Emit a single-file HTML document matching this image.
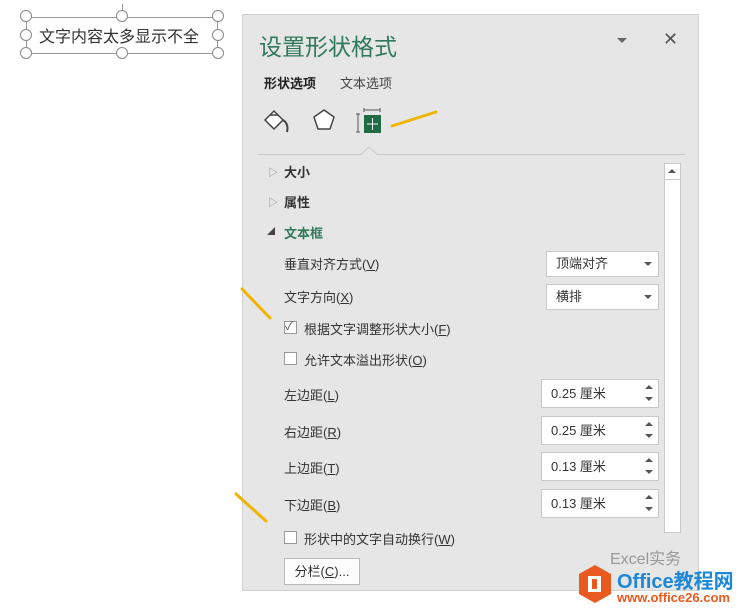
<!DOCTYPE html>
<html><head><meta charset="utf-8"><style>
*{margin:0;padding:0;box-sizing:border-box}
body{width:741px;height:613px;background:#fff;position:relative;overflow:hidden;font-family:"Liberation Sans","Noto Sans CJK SC",sans-serif;color:#333}
.a{position:absolute;white-space:nowrap}
.panel{position:absolute;left:242px;top:14px;width:457px;height:577px;background:#e6e6e6;border:1px solid #d2d2d2}
.t{font-size:13px;color:#333}
.box{position:absolute;background:#fff;border:1px solid #c8c8c8;font-size:13px;padding-left:9px;color:#333}
.cb{position:absolute;width:13px;height:13px;background:#fff;border:1px solid #999}
.h{border-radius:50%;width:12px;height:12px;border:1.5px solid #888;background:#fff;position:absolute}
</style></head><body>
<div class="a" style="left:26px;top:17px;width:192px;height:37px;border:1.5px solid #999"></div>
<div class="a" style="left:122px;top:4px;width:1px;height:12px;background:#999"></div>
<div class="h" style="left:20px;top:10px"></div><div class="h" style="left:116px;top:10px"></div><div class="h" style="left:212px;top:10px"></div>
<div class="h" style="left:20px;top:29px"></div><div class="h" style="left:212px;top:29px"></div>
<div class="h" style="left:20px;top:47px"></div><div class="h" style="left:116px;top:47px"></div><div class="h" style="left:212px;top:47px"></div>
<div class="a" style="left:39px;top:23px;font-size:16px;color:#333">文字内容太多显示不全</div>

<div class="panel"></div>
<div class="a" style="left:259px;top:28px;font-size:23px;color:#2f7a5a">设置形状格式</div>
<div class="a" style="left:617px;top:38px;width:0;height:0;border-left:5px solid transparent;border-right:5px solid transparent;border-top:5px solid #666"></div>
<div class="a" style="left:663px;top:29px;font-size:18px;color:#555">✕</div>
<div class="a" style="left:264px;top:73px;font-size:13px;font-weight:bold;color:#222">形状选项</div>
<div class="a" style="left:340px;top:73px;font-size:13px;color:#444">文本选项</div>
<svg class="a" style="left:262px;top:106px" width="32" height="28"><path d="M3 14 L12 5 L21 14 L12 23 Z" fill="#fff" stroke="#444" stroke-width="1.5"/><path d="M8 9 L16 9" stroke="#444" stroke-width="1.5"/><path d="M21 14 Q27 18 25 26" fill="none" stroke="#444" stroke-width="2"/></svg>
<svg class="a" style="left:311px;top:107px" width="26" height="26"><path d="M13 3 L23 10 L19 22 L7 22 L3 10 Z" fill="#fff" stroke="#444" stroke-width="1.5"/></svg>
<svg class="a" style="left:356px;top:108px" width="28" height="26"><path d="M2 6 L2 24 M0 6 L4 6 M0 24 L4 24 M8 2 L24 2 M8 0 L8 4 M24 0 L24 4" stroke="#555" stroke-width="1"/><rect x="8" y="7" width="17" height="18" fill="#1f6b45"/><path d="M16.5 10 L16.5 22 M11 16 L22 16" stroke="#fff" stroke-width="1"/></svg>
<svg class="a" style="left:388px;top:108px" width="52" height="22"><path d="M4 18 L48 4" stroke="#f0b400" stroke-width="3" stroke-linecap="round"/></svg>
<div class="a" style="left:258px;top:154px;width:427px;height:1px;background:#c9c9c9"></div>
<svg class="a" style="left:360px;top:146px" width="18" height="10"><path d="M0 9 L9 1 L18 9" fill="#e6e6e6" stroke="#c9c9c9"/></svg>
<div class="a" style="left:664px;top:163px;width:17px;height:370px;background:#fff;border:1px solid #c8c8c8"></div>
<div class="a" style="left:664px;top:163px;width:17px;height:17px;border:1px solid #c8c8c8"></div>
<div class="a" style="left:668px;top:169px;border-left:4px solid transparent;border-right:4px solid transparent;border-bottom:4px solid #555"></div>
<div class="a" style="left:268px;top:164px;font-size:10px;color:#888">▷</div>
<div class="a" style="left:284px;top:162px;font-size:13px;font-weight:bold;color:#333">大小</div>
<div class="a" style="left:268px;top:194px;font-size:10px;color:#888">▷</div>
<div class="a" style="left:284px;top:192px;font-size:13px;font-weight:bold;color:#333">属性</div>
<div class="a" style="left:267px;top:226px;font-size:8px;color:#444">◢</div>
<div class="a" style="left:284px;top:223px;font-size:13px;font-weight:bold;color:#2f7a5a">文本框</div>
<div class="a t" style="left:284px;top:254px">垂直对齐方式(<u>V</u>)</div>
<div class="box" style="left:546px;top:251px;width:113px;height:26px;line-height:24px">顶端对齐<span style="position:absolute;right:6px;top:10px;border-left:4px solid transparent;border-right:4px solid transparent;border-top:4px solid #555"></span></div>
<div class="a t" style="left:284px;top:287px">文字方向(<u>X</u>)</div>
<div class="box" style="left:546px;top:284px;width:113px;height:26px;line-height:24px">横排<span style="position:absolute;right:6px;top:10px;border-left:4px solid transparent;border-right:4px solid transparent;border-top:4px solid #555"></span></div>
<div class="cb" style="left:284px;top:321px"></div><div class="a" style="left:285px;top:317px;font-size:12px;color:#555">✓</div>
<div class="a t" style="left:304px;top:319px">根据文字调整形状大小(<u>F</u>)</div>
<div class="cb" style="left:284px;top:352px"></div>
<div class="a t" style="left:304px;top:350px">允许文本溢出形状(<u>O</u>)</div>
<div class="a t" style="left:284px;top:385px">左边距(<u>L</u>)</div>
<div class="a t" style="left:284px;top:422px">右边距(<u>R</u>)</div>
<div class="a t" style="left:284px;top:458px">上边距(<u>T</u>)</div>
<div class="a t" style="left:284px;top:495px">下边距(<u>B</u>)</div>
<div class="box" style="left:541px;top:379px;width:118px;height:29px;line-height:27px">0.25 厘米</div>
<div class="box" style="left:541px;top:416px;width:118px;height:29px;line-height:27px">0.25 厘米</div>
<div class="box" style="left:541px;top:452px;width:118px;height:29px;line-height:27px">0.13 厘米</div>
<div class="box" style="left:541px;top:489px;width:118px;height:29px;line-height:27px">0.13 厘米</div>
<svg class="a" style="left:644px;top:383px" width="10" height="130"><g fill="#555"><path d="M1 6 L5 2 L9 6Z M1 14 L5 18 L9 14Z"/><path d="M1 43 L5 39 L9 43Z M1 51 L5 55 L9 51Z"/><path d="M1 79 L5 75 L9 79Z M1 87 L5 91 L9 87Z"/><path d="M1 116 L5 112 L9 116Z M1 124 L5 128 L9 124Z"/></g></svg>
<div class="cb" style="left:284px;top:531px"></div>
<div class="a t" style="left:304px;top:529px">形状中的文字自动换行(<u>W</u>)</div>
<div class="a" style="left:284px;top:558px;width:76px;height:27px;background:#fdfdfd;border:1px solid #bbb;font-size:13px;line-height:25px;text-align:center">分栏(<u>C</u>)...</div>
<svg class="a" style="left:238px;top:285px" width="40" height="40"><path d="M4 4 L32 33" stroke="#f0b400" stroke-width="3" stroke-linecap="round"/></svg>
<svg class="a" style="left:232px;top:490px" width="44" height="40"><path d="M4 4 L34 31" stroke="#f0b400" stroke-width="3" stroke-linecap="round"/></svg>
<div class="a" style="left:610px;top:545px;font-size:16px;color:#999">Excel实务</div>
<svg class="a" style="left:577px;top:564px" width="36" height="40"><path d="M18 1 L34 10 L34 30 L18 39 L2 30 L2 10Z" fill="#e85a1d"/><rect x="11" y="12" width="13" height="16" fill="#fff"/><rect x="15" y="15" width="5" height="10" fill="#e85a1d"/></svg>
<div class="a" style="left:617px;top:565px;font-size:20px;font-weight:bold;color:#1e88d8">Office教程网</div>
<div class="a" style="left:617px;top:590px;font-size:13px;font-weight:bold;color:#e85a1d">www.office26.com</div>
</body></html>
